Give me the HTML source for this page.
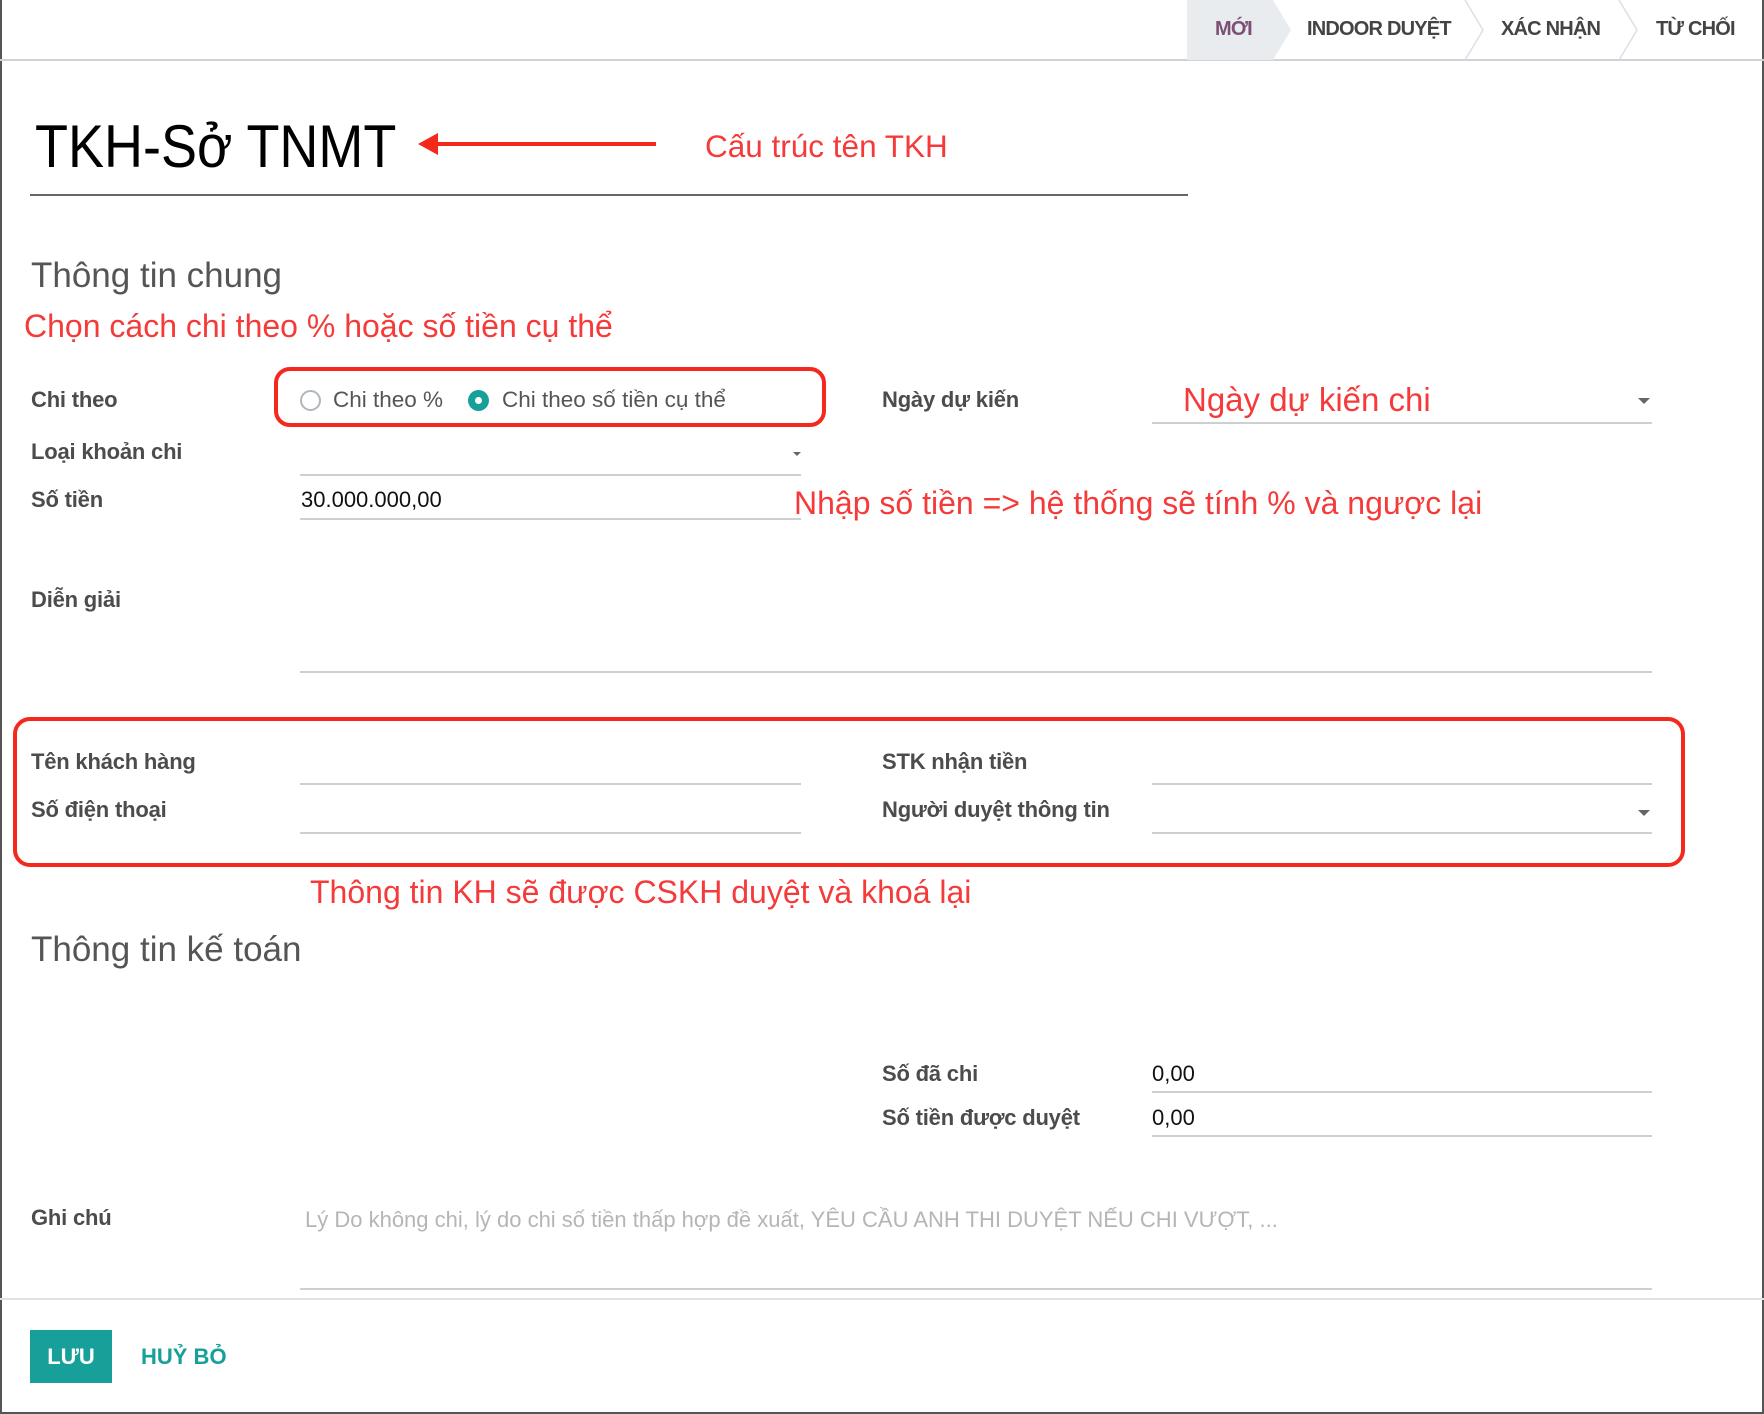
<!DOCTYPE html>
<html><head><meta charset="utf-8"><style>
*{margin:0;padding:0;box-sizing:border-box}
body{width:1764px;height:1414px;background:#fff;position:relative;overflow:hidden;font-family:"Liberation Sans",sans-serif}
.a{position:absolute;white-space:nowrap}
.lbl{font-weight:bold;color:#4c4c4c;font-size:22px;line-height:22px;letter-spacing:-0.2px}
.red{color:#f53a3a;font-size:32px;line-height:32px}
.ln{position:absolute;height:2px;background:#cfcfcf}
.sec{color:#555;font-size:35px;line-height:35px}
.val{color:#111;font-size:22px;line-height:22px}
.st{font-size:20px;line-height:20px;color:#444;font-weight:bold;letter-spacing:-0.8px}
</style></head><body>
<div class="a" style="left:0;top:0;width:2px;height:1414px;background:#555"></div>
<div class="a" style="right:0;top:0;width:2px;height:1414px;background:#555"></div>
<div class="a" style="left:0;bottom:0;width:1764px;height:2px;background:#555"></div>
<div class="a" style="left:0;top:59px;width:1764px;height:2px;background:#cfd3d8"></div>
<svg class="a" style="left:1180px;top:0" width="584" height="60">
<polygon points="7,0 93,0 111,30 93,60 7,60" fill="#e9ecef"/>
<polyline points="285,0 303,30 285,60" fill="none" stroke="#dcdfe3" stroke-width="1.5"/>
<polyline points="439,0 457,30 439,60" fill="none" stroke="#dcdfe3" stroke-width="1.5"/>
</svg>
<div class="a st" style="left:1215px;top:19px;color:#7c4f77">MỚI</div>
<div class="a st" style="left:1307px;top:19px">INDOOR DUYỆT</div>
<div class="a st" style="left:1501px;top:19px">XÁC NHẬN</div>
<div class="a st" style="left:1656px;top:19px">TỪ CHỐI</div>

<div class="a" style="left:35px;top:117px;font-size:60px;line-height:60px;color:#000;transform:scaleX(0.9);transform-origin:0 0">TKH-Sở TNMT</div>
<div class="a" style="left:30px;top:194px;width:1158px;height:2px;background:#666"></div>
<svg class="a" style="left:416px;top:129px" width="250" height="30"><polygon points="2,15 22,4 22,26" fill="#f5281e"/><rect x="20" y="13" width="220" height="4" fill="#f5281e"/></svg>
<div class="a red" style="left:705px;top:130px;font-size:31.5px">Cấu trúc tên TKH</div>

<div class="a sec" style="left:31px;top:258px">Thông tin chung</div>
<div class="a red" style="left:24px;top:310px">Chọn cách chi theo % hoặc số tiền cụ thể</div>

<div class="a lbl" style="left:31px;top:389px">Chi theo</div>
<div class="a" style="left:274px;top:367px;width:552px;height:60px;border:4px solid #f5281e;border-radius:16px"></div>
<div class="a" style="left:300px;top:390px;width:21px;height:21px;border:2px solid #b0b6bd;border-radius:50%"></div>
<div class="a" style="left:333px;top:389px;font-size:22.5px;line-height:22px;color:#555">Chi theo %</div>
<div class="a" style="left:468px;top:390px;width:21px;height:21px;background:#17a09a;border-radius:50%"></div>
<div class="a" style="left:475px;top:397px;width:7px;height:7px;background:#fff;border-radius:50%"></div>
<div class="a" style="left:502px;top:389px;font-size:22.5px;line-height:22px;color:#555">Chi theo số tiền cụ thể</div>

<div class="a lbl" style="left:882px;top:389px">Ngày dự kiến</div>
<div class="a" style="left:1183px;top:383px;color:#f53a3a;font-size:33px;line-height:33px">Ngày dự kiến chi</div>
<div class="ln" style="left:1152px;top:422px;width:500px"></div>
<div class="a" style="left:1638px;top:398px;border-left:6px solid transparent;border-right:6px solid transparent;border-top:6px solid #666"></div>

<div class="a lbl" style="left:31px;top:441px">Loại khoản chi</div>
<div class="ln" style="left:300px;top:474px;width:501px"></div>
<div class="a" style="left:793px;top:452px;border-left:4px solid transparent;border-right:4px solid transparent;border-top:4px solid #666"></div>

<div class="a lbl" style="left:31px;top:489px">Số tiền</div>
<div class="a val" style="left:301px;top:489px">30.000.000,00</div>
<div class="ln" style="left:300px;top:518px;width:501px"></div>
<div class="a red" style="left:794px;top:487px">Nhập số tiền =&gt; hệ thống sẽ tính % và ngược lại</div>

<div class="a lbl" style="left:31px;top:589px">Diễn giải</div>
<div class="ln" style="left:300px;top:671px;width:1352px"></div>

<div class="a" style="left:13px;top:717px;width:1672px;height:150px;border:4px solid #f5281e;border-radius:17px"></div>
<div class="a lbl" style="left:31px;top:751px">Tên khách hàng</div>
<div class="ln" style="left:300px;top:783px;width:501px"></div>
<div class="a lbl" style="left:31px;top:799px">Số điện thoại</div>
<div class="ln" style="left:300px;top:832px;width:501px"></div>
<div class="a lbl" style="left:882px;top:751px">STK nhận tiền</div>
<div class="ln" style="left:1152px;top:783px;width:500px"></div>
<div class="a lbl" style="left:882px;top:799px">Người duyệt thông tin</div>
<div class="ln" style="left:1152px;top:832px;width:500px"></div>
<div class="a" style="left:1638px;top:810px;border-left:6px solid transparent;border-right:6px solid transparent;border-top:6px solid #666"></div>

<div class="a red" style="left:310px;top:876px">Thông tin KH sẽ được CSKH duyệt và khoá lại</div>
<div class="a sec" style="left:31px;top:932px">Thông tin kế toán</div>

<div class="a lbl" style="left:882px;top:1063px">Số đã chi</div>
<div class="a val" style="left:1152px;top:1063px">0,00</div>
<div class="ln" style="left:1152px;top:1091px;width:500px"></div>
<div class="a lbl" style="left:882px;top:1107px">Số tiền được duyệt</div>
<div class="a val" style="left:1152px;top:1107px">0,00</div>
<div class="ln" style="left:1152px;top:1135px;width:500px"></div>

<div class="a lbl" style="left:31px;top:1207px">Ghi chú</div>
<div class="a" style="left:305px;top:1209px;font-size:22px;line-height:22px;color:#b5b5b5">Lý Do không chi, lý do chi số tiền thấp hợp đề xuất, YÊU CẦU ANH THI DUYỆT NẾU CHI VƯỢT, ...</div>
<div class="ln" style="left:300px;top:1288px;width:1352px"></div>

<div class="a" style="left:0;top:1298px;width:1764px;height:2px;background:#dee2e6"></div>
<div class="a" style="left:30px;top:1330px;width:82px;height:53px;background:#17a09a;color:#fff;font-weight:bold;font-size:22px;line-height:53px;text-align:center">LƯU</div>
<div class="a" style="left:141px;top:1346px;color:#17a09a;font-weight:bold;font-size:22px;line-height:22px">HUỶ BỎ</div>
</body></html>
